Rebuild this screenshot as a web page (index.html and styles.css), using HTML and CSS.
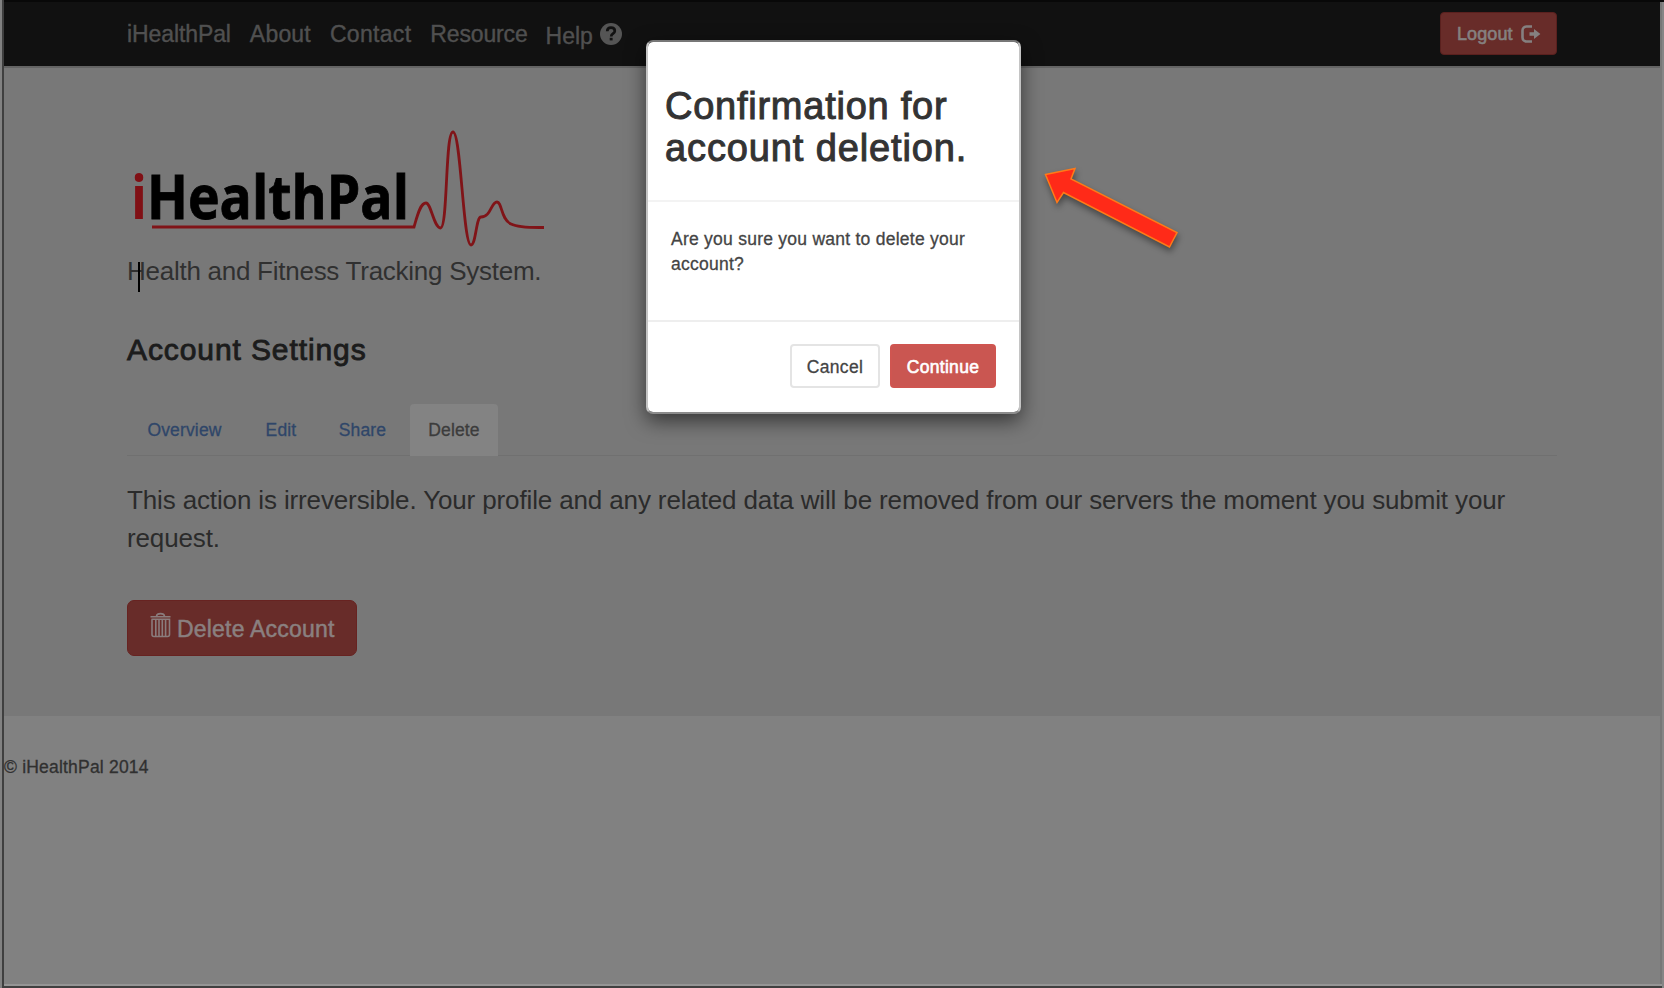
FILE: index.html
```html
<!DOCTYPE html>
<html lang="en">
<head>
<meta charset="utf-8">
<title>iHealthPal - Account Settings</title>
<link rel="stylesheet" href="styles.css">
</head>
<body>
<div class="window">
  <nav class="navbar">
    <div class="nav-links">
      <a class="n1">iHealthPal</a>
      <a class="n2">About</a>
      <a class="n3">Contact</a>
      <a class="n4">Resource</a>
      <a class="help"><span>Help</span>
        <svg width="22" height="22" viewBox="0 0 22 22"><circle cx="11" cy="11" r="11" fill="#555"/><path d="M7.2 8.3C7.3 5.8 8.8 4.7 11 4.7s3.8 1.2 3.8 3.3c0 2.8-3.6 2.6-3.6 5.4" fill="none" stroke="#111" stroke-width="2.7"/><rect x="9.7" y="14.8" width="2.9" height="2.6" fill="#111"/></svg>
      </a>
    </div>
    <button class="logout"><span>Logout</span>
      <svg width="20" height="18" viewBox="0 0 20 18"><path d="M11 1.500H5.500a4 4 0 0 0-4 4v7a4 4 0 0 0 4 4H11" fill="none" stroke="#858080" stroke-width="2.6"/><path d="M8.500 7.200h4.500V4L19.400 9l-6.400 5V10.800H8.500z" fill="#858080"/></svg>
    </button>
  </nav>
  <main class="content">
    <svg class="logo" width="430" height="130" viewBox="0 0 430 130">
      <g font-family="Open Sans, sans-serif" font-weight="700" font-size="61">
        <text x="4" y="94" fill="#801015" textLength="16" lengthAdjust="spacingAndGlyphs">i</text>
        <text x="20" y="94" fill="#000" stroke="#000" stroke-width=".8" textLength="262" lengthAdjust="spacingAndGlyphs">HealthPal</text>
      </g>
      <path d="M25 102H287C290 92 293 78 299 78C304 78 307 103 313.500 103C321 103 318 7 326 7C334 7 336 120 344 120C349 120 349 92 354 92C364 92 364 77 370 77C375 77 374 95 384 99C392 103 405 102.500 417 102.500" fill="none" stroke="#801418" stroke-width="2.800"/>
    </svg>
    <p class="tagline">Health and Fitness Tracking System.</p>
    <h3 class="heading">Account Settings</h3>
    <div class="tabs">
      <a class="tab t1">Overview</a><a class="tab t2">Edit</a><a class="tab t3">Share</a><a class="tab active">Delete</a>
    </div>
    <p class="lead">This action is irreversible. Your profile and any related data will be removed from our servers the moment you submit your<br>request.</p>
    <button class="delete">
      <svg width="21" height="26" viewBox="0 0 21 26"><g fill="none" stroke="#8a7c7c" stroke-width="1.600"><path d="M6.500 4C7 .8 14 .8 14.500 4M.5 4.700H20.500M1.500 7.200H19.500V22.500a2 2 0 0 1-2 2H4a2 2 0 0 1-2-2V7.200M5.800 8V24M9 8V24M12.300 8V24M15.600 8V24"/></g></svg>
      <span>Delete Account</span>
    </button>
  </main>
  <footer class="footer">© iHealthPal 2014</footer>
</div>
<i class="edge-right"></i>
<i class="edge-bottom"></i>
<i class="caret"></i>
<div class="modal">
  <header><h1><span class="h-a">Confirmation for</span><br><span class="h-b">account deletion.</span></h1></header>
  <section>Are you sure you want to delete your<br>account?</section>
  <div class="actions"><button class="cancel">Cancel</button><button class="continue">Continue</button></div>
</div>
<svg class="arrow" width="150" height="100" viewBox="0 0 150 100"><path d="M5.500 14.500L35 8.500L31 19L137 72.500L129.500 87L23.500 32.500L17 42.500Z" fill="#ff2a18" stroke="#ff7a18" stroke-width="1.500"/></svg>
</body>
</html>
```
FILE: styles.css
```css
* { box-sizing: border-box; }
html { background: #ccc; }
body { margin: 0; width: 1664px; height: 988px; overflow: hidden; position: relative; background: #818181; font-family: "Liberation Sans", Arial, sans-serif; }
button { font-family: inherit; margin: 0; padding: 0; display: flex; align-items: center; }
p, h1, h3 { margin: 0; }
.window { height: 988px; border-left: 2px solid #3f3f3f; margin-left: 2px; display: flex; flex-direction: column; }
.navbar { height: 68px; flex: none; background: #111; border-top: 2px solid #080808; border-bottom: 2px solid #646464; padding: 0 107px 0 123px; display: flex; justify-content: space-between; align-items: flex-start; }
.nav-links { display: flex; gap: 19px; color: #505050; font-size: 23px; line-height: 26px; padding-top: 19px; -webkit-text-stroke: .4px #505050; }
.n1 { letter-spacing: -.1px; }
.n2 { letter-spacing: .2px; }
.n3 { letter-spacing: .3px; }
.n4 { letter-spacing: -.15px; }
.help { display: flex; gap: 7px; margin-left: -1px; }
.help span { padding-top: 2px; }
.help svg { margin-top: 2px; }
.logout { width: 117px; height: 43px; margin-top: 10px; border: 1px solid #5a201e; border-radius: 4px; background: #682c29; color: #858080; font-size: 18px; padding-left: 16px; gap: 8px; letter-spacing: .1px; -webkit-text-stroke: .6px #858080; }
.logout span { padding-top: 2px; }
.content { height: 648px; flex: none; background: #787878; padding: 57px 107px 0 123px; color: #2b2b2b; }
.logo { display: block; }
.tagline { height: 42px; line-height: 32px; font-size: 26px; letter-spacing: -.26px; color: #303030; }
.heading { margin-top: 36px; font-size: 30px; line-height: 34px; font-weight: 400; letter-spacing: .9px; color: #1c1c1c; -webkit-text-stroke: .9px #1c1c1c; }
.tabs { margin-top: 37px; height: 52px; border-bottom: 1px solid #707070; display: flex; font-size: 17.5px; line-height: 53px; letter-spacing: .15px; color: #2f4669; -webkit-text-stroke: .3px; }
.tab { text-align: center; height: 52px; }
.t1 { width: 115px; }
.t2 { width: 78px; }
.t3 { width: 85px; }
.active { margin-left: 5px; width: 88px; background: #838383; color: #3c3c3c; border-radius: 4px 4px 0 0; }
.lead { margin-top: 25px; font-size: 26px; line-height: 38px; letter-spacing: -.135px; white-space: nowrap; color: #2b2b2b; }
.delete { width: 230px; height: 56px; margin-top: 43px; background: #682c29; border: 1px solid #672321; border-radius: 7px; padding-left: 22px; gap: 6px; color: #8a8080; font-size: 23px; letter-spacing: .2px; -webkit-text-stroke: .5px #8a8080; }
.delete svg { margin-top: -6px; }
.delete span { padding-top: 2px; }
.footer { font-size: 17.5px; padding-top: 41px; line-height: 20px; letter-spacing: .2px; color: #303030; -webkit-text-stroke: .3px; }
.edge-right { position: absolute; right: 0; top: 2px; bottom: 0; width: 4px; background: #777; border-right: 2px solid #858585; }
.edge-bottom { position: absolute; left: 4px; right: 2px; bottom: 0; height: 4px; background: #404040; border-top: 2px solid #959595; }
.caret { position: absolute; left: 138px; top: 262px; width: 2px; height: 30px; background: #000; }
.modal { position: absolute; left: 646px; top: 40px; width: 375px; height: 374px; background: #fff; background-clip: padding-box; border: 2px solid; border-color: #777 #c4c4c4 #8c8c8c; border-radius: 7px; box-shadow: 0 7px 20px rgba(0,0,0,.55); color: #333; }
.modal header { height: 160px; padding: 44px 17px 0; border-bottom: 2px solid #f3f3f3; }
.modal h1 { font-size: 38px; line-height: 41.7px; font-weight: 400; white-space: nowrap; -webkit-text-stroke: 1px #333; }
.h-a { letter-spacing: .75px; }
.h-b { letter-spacing: .88px; }
.modal section { height: 120px; padding: 25px 23px 0; border-bottom: 2px solid #eee; font-size: 17.5px; line-height: 25px; letter-spacing: .25px; white-space: nowrap; color: #444; -webkit-text-stroke: .3px; }
.actions { display: flex; justify-content: flex-end; gap: 10px; padding: 22px 23px 0; }
.actions button { justify-content: center; height: 44px; font-size: 17.5px; border-radius: 4px; letter-spacing: .3px; padding-top: 2px; }
.cancel { width: 90px; background: #fff; border: 2px solid #e4e4e4; color: #444; -webkit-text-stroke: .3px; }
.continue { width: 106px; background: #ca5651; border: 2px solid #cf5550; color: #fff; -webkit-text-stroke: .6px #fff; }
.arrow { position: absolute; left: 1040px; top: 160px; filter: drop-shadow(1px 4px 3px rgba(0,0,0,.4)); }
```
